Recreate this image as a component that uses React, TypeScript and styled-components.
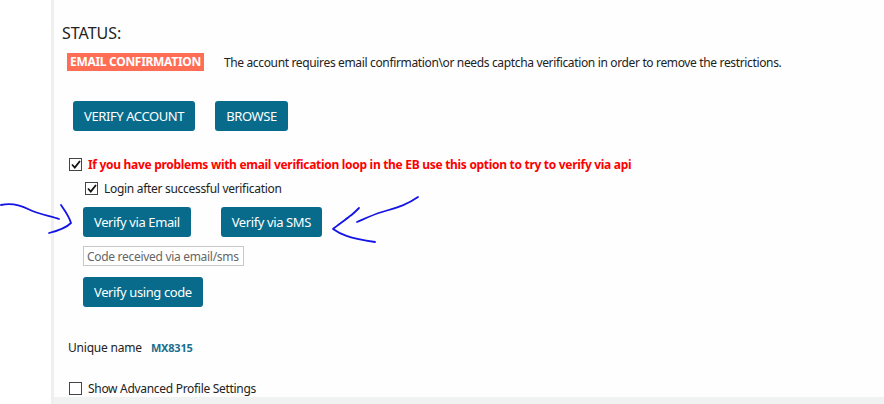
import React from 'react';
import styled, { createGlobalStyle } from 'styled-components';

const GlobalStyle = createGlobalStyle`
  html, body {
    margin: 0;
    padding: 0;
    background: #ffffff;
  }
  body {
    font-family: "Noto Sans", "Open Sans", sans-serif;
    color: #222;
  }
`;

const Page = styled.div`
  position: relative;
  display: flex;
  width: 884px;
  height: 404px;
  overflow: hidden;
`;

const Gutter = styled.div`
  width: 51px;
  flex-shrink: 0;
  background: #ffffff;
`;

const Main = styled.div`
  flex: 1;
  display: flex;
  flex-direction: column;
  border-left: 3px solid #efefef;
`;

const Panel = styled.div`
  height: 397px;
  background: #fefefe;
  padding: 23px 0 0 8px;
  box-sizing: border-box;
`;

const Footer = styled.div`
  flex: 1;
  background: #f1f2f2;
`;

const StatusTitle = styled.div`
  font-size: 16px;
  line-height: 20px;
  color: #222;
`;

const StatusRow = styled.div`
  display: flex;
  align-items: center;
  gap: 20px;
  margin: 10px 0 0 5px;
`;

const Badge = styled.span`
  background: #ff6d55;
  color: #fff;
  font-weight: 700;
  font-size: 12px;
  line-height: 18px;
  height: 18px;
  padding: 0 3px;
  letter-spacing: -0.3px;
`;

const Description = styled.span`
  font-size: 12px;
  letter-spacing: -0.35px;
  color: #222;
`;

const ButtonRow = styled.div<{ $gap: number; $indent: number; $top: number }>`
  display: flex;
  gap: ${(p) => p.$gap}px;
  margin: ${(p) => p.$top}px 0 0 ${(p) => p.$indent}px;
`;

const Button = styled.button<{ $upper?: boolean }>`
  height: 30px;
  padding: 0 11px;
  border: none;
  border-radius: 3px;
  background: #086b8b;
  color: #fff;
  font-family: inherit;
  font-size: 13px;
  letter-spacing: -0.4px;
  text-transform: ${(p) => (p.$upper ? 'uppercase' : 'none')};
  cursor: pointer;
`;

const CheckRow = styled.label<{ $indent: number; $top: number }>`
  display: flex;
  align-items: center;
  gap: 6px;
  margin: ${(p) => p.$top}px 0 0 ${(p) => p.$indent}px;
  height: 14px;
`;

const Box = styled.span`
  width: 11px;
  height: 11px;
  border: 1px solid #444;
  background: #fff;
  display: flex;
  align-items: center;
  justify-content: center;
  flex-shrink: 0;
`;

const WarnText = styled.span`
  color: #ff0000;
  font-weight: 700;
  font-size: 12px;
  letter-spacing: -0.3px;
`;

const LabelText = styled.span`
  font-size: 12px;
  letter-spacing: -0.3px;
  color: #222;
`;

const CodeInput = styled.input`
  display: block;
  width: 161px;
  height: 20px;
  box-sizing: border-box;
  margin: 9px 0 0 21px;
  border: 1px solid #c8c8c8;
  padding: 0 3px;
  font-family: inherit;
  font-size: 12px;
  letter-spacing: -0.3px;
  &::placeholder {
    color: #666;
  }
`;

const InfoRow = styled.div`
  display: flex;
  align-items: center;
  gap: 9px;
  margin: 32px 0 0 6px;
  font-size: 12px;
  letter-spacing: -0.2px;
`;

const InfoValue = styled.span`
  color: #1b6f8d;
  font-weight: 700;
  font-size: 11px;
`;

const Annotations = styled.svg`
  position: absolute;
  left: 0;
  top: 0;
  pointer-events: none;
`;

const Check = () => (
  <svg width="10" height="9" viewBox="0 0 10 9">
    <path d="M1 4.5 L3.8 7.5 L9 1" fill="none" stroke="#111" strokeWidth="1.8" />
  </svg>
);

const CheckBox: React.FC<{ checked?: boolean }> = ({ checked }) => <Box>{checked && <Check />}</Box>;

export default function App() {
  return (
    <>
      <GlobalStyle />
      <Page>
        <Gutter />
        <Main>
          <Panel>
            <StatusTitle>STATUS:</StatusTitle>
            <StatusRow>
              <Badge>EMAIL CONFIRMATION</Badge>
              <Description>
                The account requires email confirmation\or needs captcha verification in order to remove the restrictions.
              </Description>
            </StatusRow>
            <ButtonRow $gap={20} $indent={11} $top={30}>
              <Button $upper>Verify account</Button>
              <Button $upper>Browse</Button>
            </ButtonRow>
            <CheckRow $indent={7} $top={26}>
              <CheckBox checked />
              <WarnText>
                If you have problems with email verification loop in the EB use this option to try to verify via api
              </WarnText>
            </CheckRow>
            <CheckRow $indent={23} $top={10}>
              <CheckBox checked />
              <LabelText>Login after successful verification</LabelText>
            </CheckRow>
            <ButtonRow $gap={30} $indent={21} $top={12}>
              <Button>Verify via Email</Button>
              <Button>Verify via SMS</Button>
            </ButtonRow>
            <CodeInput placeholder="Code received via email/sms" />
            <ButtonRow $gap={0} $indent={21} $top={11}>
              <Button>Verify using code</Button>
            </ButtonRow>
            <InfoRow>
              <span>Unique name</span>
              <InfoValue>MX8315</InfoValue>
            </InfoRow>
            <CheckRow $indent={7} $top={25}>
              <CheckBox />
              <LabelText>Show Advanced Profile Settings</LabelText>
            </CheckRow>
          </Panel>
          <Footer />
        </Main>
        <Annotations width="884" height="404" viewBox="0 0 884 404">
          <g fill="none" stroke="#1414e6" strokeWidth="1.8" strokeLinecap="round" strokeLinejoin="round">
            <path d="M1 205 C10 203 18 204 28 209 C38 214 50 216 59 219" />
            <path d="M61 205 C65 211 69 216 71 223 C66 228 57 231 49 233" />
            <path d="M418 197 C405 206 395 208 382 212 C372 215 364 219 357 222" />
            <path d="M359 208 C355 212 352 215 350 216 C345 220 338 225 333 229 C340 234 348 238 375 242" />
          </g>
        </Annotations>
      </Page>
    </>
  );
}
